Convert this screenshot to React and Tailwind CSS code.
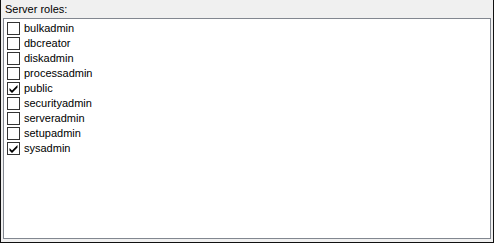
import React from "react";

const roles = [
  { name: "bulkadmin", checked: false },
  { name: "dbcreator", checked: false },
  { name: "diskadmin", checked: false },
  { name: "processadmin", checked: false },
  { name: "public", checked: true },
  { name: "securityadmin", checked: false },
  { name: "serveradmin", checked: false },
  { name: "setupadmin", checked: false },
  { name: "sysadmin", checked: true },
];

const RoleRow = ({ name, checked }) => (
  <div className="flex items-center h-[15px]">
    <span className="w-[13px] h-[13px] border border-[#333333] bg-white flex items-center justify-center shrink-0">
      {checked && (
        <svg width="9" height="9" viewBox="0 0 9 9">
          <path d="M0.5 4 L3 6.5 L8.5 1 L8.5 3.5 L3 9 L0.5 6.5 Z" fill="#000" />
        </svg>
      )}
    </span>
    <span className="ml-[4px] text-[11px] leading-none text-black">{name}</span>
  </div>
);

export default function App() {
  return (
    <div
      className="w-[494px] h-[243px] bg-[#f0f0f0] border-l border-r border-b border-[#111111] flex flex-col"
      style={{ fontFamily: '"Liberation Sans", Arial, sans-serif' }}
    >
      {/* Label */}
      <div className="h-[18px] pl-[4px] pt-[3px] text-[11px] leading-[13px] text-black">
        Server roles:
      </div>

      {/* List */}
      <div className="flex-1 ml-[2px] mr-[2px] mb-[3px] border border-[#828790] bg-white pl-[3px] pt-[2px]">
        {roles.map((r) => (
          <RoleRow key={r.name} name={r.name} checked={r.checked} />
        ))}
      </div>
    </div>
  );
}
